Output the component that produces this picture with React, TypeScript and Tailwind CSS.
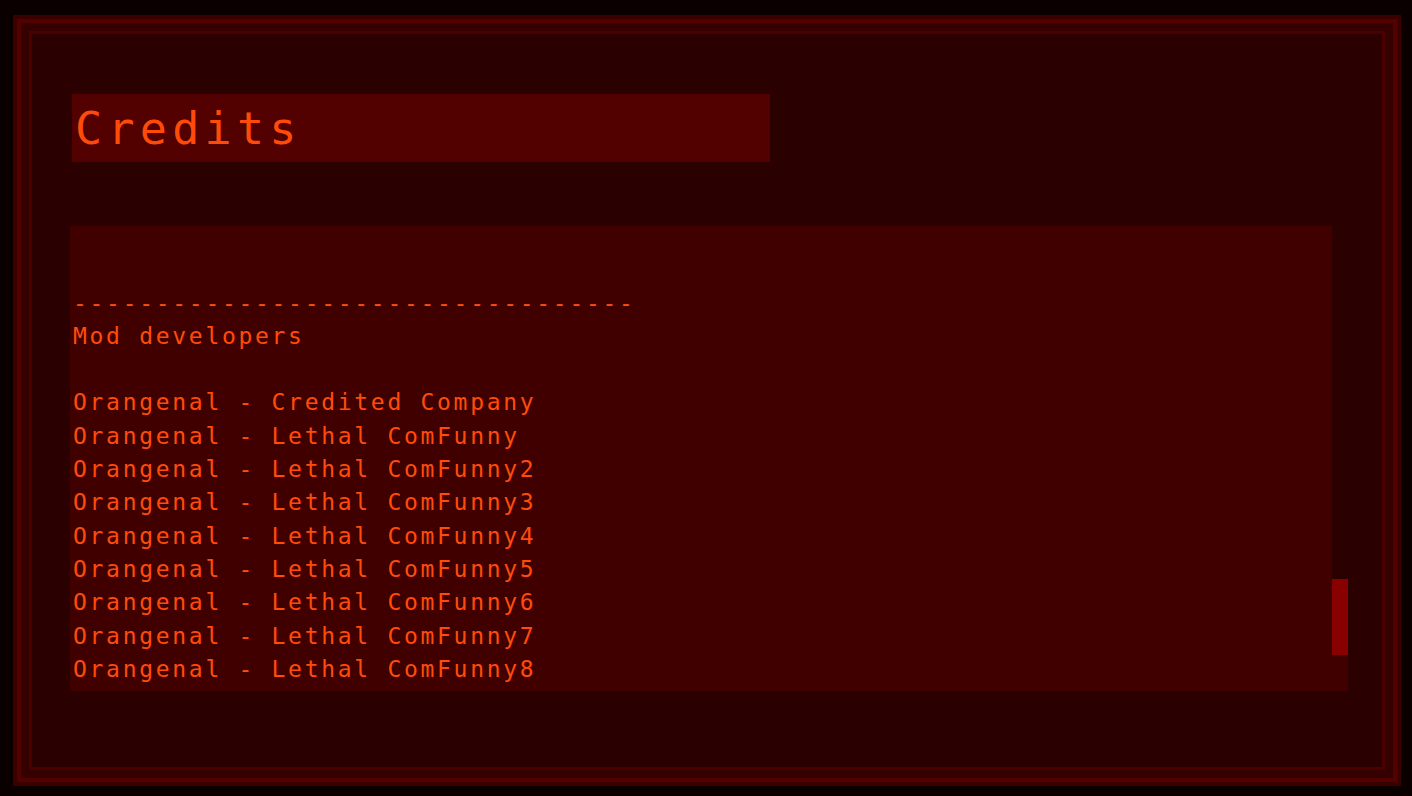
import React from "react";

const lines: string[] = [
  "",
  "",
  "",
  "----------------------------------",
  "Mod developers",
  "",
  "Orangenal - Credited Company",
  "Orangenal - Lethal ComFunny",
  "Orangenal - Lethal ComFunny2",
  "Orangenal - Lethal ComFunny3",
  "Orangenal - Lethal ComFunny4",
  "Orangenal - Lethal ComFunny5",
  "Orangenal - Lethal ComFunny6",
  "Orangenal - Lethal ComFunny7",
  "Orangenal - Lethal ComFunny8",
];

export default function App() {
  return (
    <div
      className="w-[1412px] h-[796px] bg-[#0b0000] pt-[15px] pl-[13px] overflow-hidden"
      style={{ fontFamily: '"DejaVu Sans Mono", "Liberation Mono", monospace' }}
    >
      <div className="w-[1388px] h-[771px] bg-[#3a0000] p-[4px]">
        <div className="h-full border-[4px] border-[#520000] bg-[#350000] p-[8px]">
          <div className="h-full border-[3px] border-[#4b0000] bg-[#2b0000] flex flex-col">
            <div className="ml-[40px] mt-[60px] w-[698px] h-[68px] bg-[#520000] flex items-center pl-[3px]">
              <span className="text-[45px] leading-none tracking-[5.3px] text-[#ff4b0a]">Credits</span>
            </div>
            <div className="ml-[38px] mt-[64px] w-[1278px] h-[465px] bg-[#400000] flex">
              <div className="flex-1 overflow-hidden flex flex-col justify-end pb-[5px] pl-[3px]">
                {lines.map((l, i) => (
                  <div
                    key={i}
                    className="h-[33.3px] shrink-0 flex items-center text-[23px] leading-none tracking-[2.7px] text-[#ff4b0a] whitespace-pre"
                  >
                    {l}
                  </div>
                ))}
              </div>
              <div className="w-[16px] flex flex-col">
                <div className="flex-1 bg-[#2b0000]" />
                <div className="h-[76px] bg-[#880000]" />
                <div className="h-[36px]" />
              </div>
            </div>
          </div>
        </div>
      </div>
    </div>
  );
}
